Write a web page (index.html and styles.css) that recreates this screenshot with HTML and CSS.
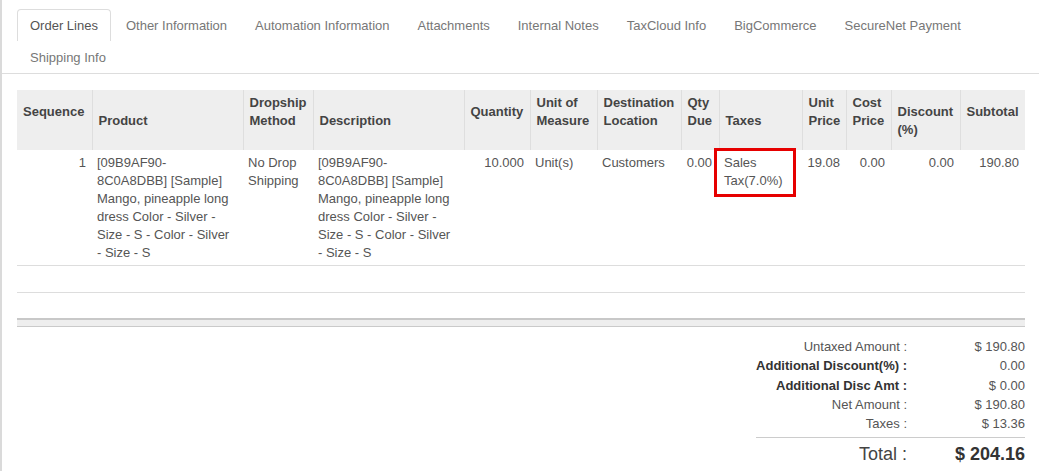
FILE: index.html
```html
<!DOCTYPE html>
<html lang="en">

<head>
  <meta charset="UTF-8" />
  <title>Sale Order - Order Lines</title>
  <link rel="stylesheet" href="styles.css">
</head>

<body>
  <div class="sheet">

    <!-- Notebook tabs -->
    <ul class="tabs">
      <li class="tab active">Order Lines</li>
      <li class="tab">Other Information</li>
      <li class="tab">Automation Information</li>
      <li class="tab">Attachments</li>
      <li class="tab">Internal Notes</li>
      <li class="tab">TaxCloud Info</li>
      <li class="tab">BigCommerce</li>
      <li class="tab">SecureNet Payment</li>
      <li class="tab">Shipping Info</li>
    </ul>

    <div class="pane">
      <table class="lines">
        <colgroup>
          <col style="width:75px">
          <col style="width:151px">
          <col style="width:70px">
          <col style="width:151px">
          <col style="width:66px">
          <col style="width:67px">
          <col style="width:84px">
          <col style="width:38px">
          <col style="width:83px">
          <col style="width:44px">
          <col style="width:45px">
          <col style="width:69px">
          <col style="width:65px">
        </colgroup>
        <thead>
          <tr>
            <th class="lift">Sequence</th>
            <th>Product</th>
            <th class="lift">Dropship Method</th>
            <th>Description</th>
            <th class="lift">Quantity</th>
            <th class="lift">Unit of Measure</th>
            <th class="lift">Destination Location</th>
            <th class="lift">Qty Due</th>
            <th>Taxes</th>
            <th class="lift">Unit Price</th>
            <th class="lift">Cost Price</th>
            <th>Discount (%)</th>
            <th class="lift">Subtotal</th>
          </tr>
        </thead>
        <tbody>
          <tr class="line">
            <td class="num">1</td>
            <td class="wide">[09B9AF90-&#8203;8C0A8DBB] [Sample] Mango, pineapple long dress Color - Silver - Size - S - Color - Silver - Size - S</td>
            <td>No Drop Shipping</td>
            <td class="wide">[09B9AF90-&#8203;8C0A8DBB] [Sample] Mango, pineapple long dress Color - Silver - Size - S - Color - Silver - Size - S</td>
            <td class="num">10.000</td>
            <td>Unit(s)</td>
            <td>Customers</td>
            <td class="num tight">0.00</td>
            <td class="taxes">Sales Tax(7.0%)<span class="highlight"></span></td>
            <td class="num">19.08</td>
            <td class="num">0.00</td>
            <td class="num">0.00</td>
            <td class="num">190.80</td>
          </tr>
          <tr class="blank">
            <td colspan="13"></td>
          </tr>
        </tbody>
      </table>
      <div class="list-foot"></div>

      <table class="totals">
        <tr>
          <td class="label">Untaxed Amount :</td>
          <td class="value">$ 190.80</td>
        </tr>
        <tr>
          <td class="label strong">Additional Discount(%) :</td>
          <td class="value">0.00</td>
        </tr>
        <tr>
          <td class="label strong">Additional Disc Amt :</td>
          <td class="value">$ 0.00</td>
        </tr>
        <tr>
          <td class="label">Net Amount :</td>
          <td class="value">$ 190.80</td>
        </tr>
        <tr class="pre-total">
          <td class="label">Taxes :</td>
          <td class="value">$ 13.36</td>
        </tr>
        <tr class="grand">
          <td class="label">Total :</td>
          <td class="value">$ 204.16</td>
        </tr>
      </table>
    </div>
  </div>
</body>

</html>
```

FILE: styles.css
```css
:root {
  --text: #555;
  --muted: #777;
  --dark: #333;
  --line: #ddd;
  --head-bg: #eee;
  --alert: #e60000;
}

* {
  box-sizing: border-box;
}

html,
body {
  margin: 0;
  padding: 0;
  background: #fff;
  font-family: 'Liberation Sans', Arial, sans-serif;
  font-size: 13px;
  color: var(--text);
}

.sheet {
  min-height: 471px;
  border-left: 2px solid #dadada;
}

/* tabs */
.tabs {
  display: flex;
  flex-wrap: wrap;
  list-style: none;
  margin: 0;
  padding: 9px 0 0 15px;
  border-bottom: 1px solid var(--line);
}

.tab {
  height: 32px;
  line-height: 31px;
  padding: 0 12px;
  margin-right: 2px;
  color: var(--muted);
  border: 1px solid transparent;
  border-bottom: none;
  border-radius: 4px 4px 0 0;
  white-space: nowrap;
}

.tab.active {
  color: var(--text);
  border-color: var(--line);
  background: #fff;
}

/* order lines */
.pane {
  padding: 16px 14px 0 15px;
}

.lines {
  width: 1008px;
  table-layout: fixed;
  border-collapse: collapse;
  line-height: 18px;
}

.lines th {
  background: var(--head-bg);
  color: #444;
  font-weight: bold;
  text-align: left;
  vertical-align: middle;
  padding: 4px 5px 2px 6px;
  border-left: 1px solid #dedede;
  height: 60px;
}

.lines th:first-child {
  border-left: none;
}

.lines th.lift {
  padding-bottom: 20px;
}

.lines td {
  vertical-align: top;
  padding: 4px 6px 3px 5px;
}

.lines td.wide {
  padding-right: 10px;
}

.lines td.num {
  text-align: right;
}

.lines td.tight {
  padding: 4px 7px 3px 3px;
}

.line td {
  border-bottom: 1px solid var(--line);
}

.taxes {
  position: relative;
}

.highlight {
  position: absolute;
  left: -5px;
  top: -2px;
  width: 82px;
  height: 49px;
  border: 3px solid var(--alert);
}

.blank td {
  height: 27px;
  padding: 0;
  border-bottom: 1px solid var(--line);
}

.list-foot {
  width: 1008px;
  height: 9px;
  margin-top: 25px;
  background: var(--head-bg);
  border-top: 2px solid #c8c8c8;
  border-bottom: 1px solid #cacaca;
}

/* totals */
.totals {
  width: 269px;
  margin: 10px 0 0 auto;
  border-collapse: collapse;
  line-height: 19.3px;
}

.totals td {
  padding: 0;
  text-align: right;
}

.totals .label {
  width: 151px;
  color: var(--text);
}

.totals .label.strong {
  font-weight: bold;
  color: var(--dark);
}

.totals .value {
  color: var(--text);
}

.totals .pre-total td {
  padding-bottom: 4px;
}

.totals .grand td {
  border-top: 1px solid #ccc;
  padding-top: 5px;
  font-size: 18px;
  line-height: 22px;
  color: #444;
}

.totals .grand .value {
  font-weight: bold;
  color: var(--dark);
}
```
